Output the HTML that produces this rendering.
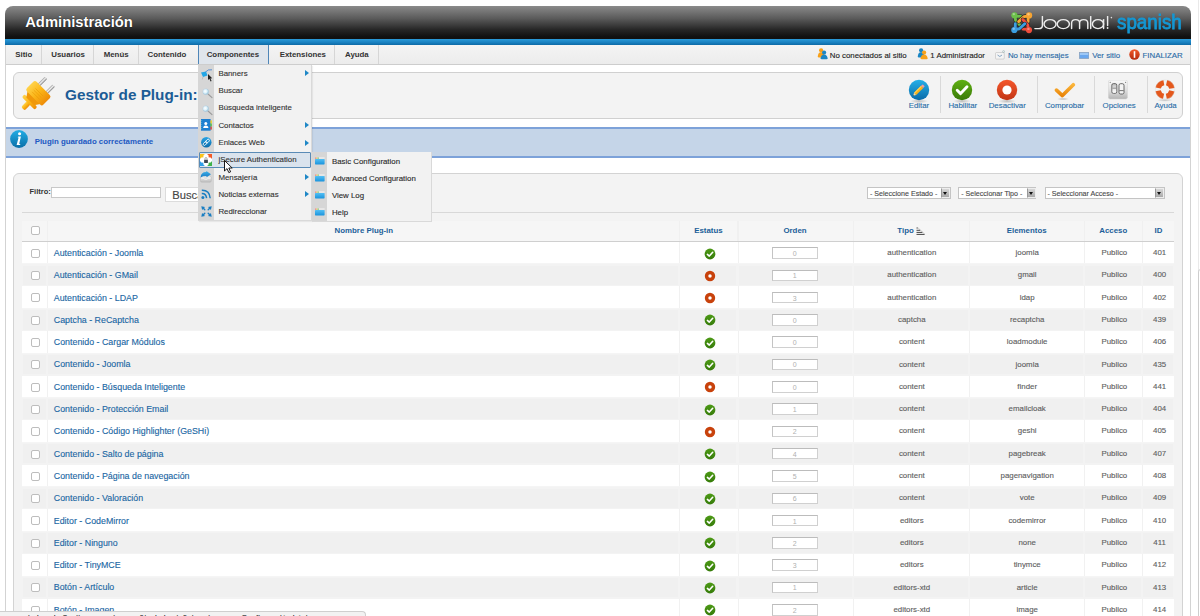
<!DOCTYPE html>
<html><head><meta charset="utf-8"><style>
*{box-sizing:border-box;margin:0;padding:0}
html,body{width:1200px;height:616px;overflow:hidden;background:#fff;font-family:"Liberation Sans",sans-serif;font-size:7.86px;line-height:1;color:#333;-webkit-text-stroke-width:0.12px}
body{position:relative}
.a{position:absolute;white-space:nowrap}
.b{font-weight:bold}
</style></head><body>
<div class="a" style="left:1197.6px;top:0;width:1px;height:272px;background:#e9e9e9"></div>
<div class="a" style="left:1197.6px;top:268.5px;width:6px;height:360px;background:#fff;border-left:1px solid #cdcdcd;border-top:1px solid #d6d6d6;border-radius:3px 0 0 0"></div>
<div class="a" style="left:5px;top:45px;width:1px;height:571px;background:#d3d3d3"></div>
<div class="a" style="left:1190px;top:45px;width:1px;height:571px;background:#d3d3d3"></div>
<div class="a" style="left:5px;top:6px;width:1186px;height:33px;border-radius:8px 8px 0 0;background:linear-gradient(#8a8a8a,#5a5a5a 38%,#262626 72%,#121212 92%,#101010)"></div>
<div class="a" style="left:25.2px;top:14.97px;font-size:14.8px;font-weight:bold;-webkit-text-stroke-width:0;color:#fff;text-shadow:0 0 1px #000">Administración</div>
<div class="a" style="left:5px;top:39px;width:1186px;height:6.2px;background:linear-gradient(#2b9ad8,#1a82c2 55%,#0d6aa6)"></div>
<div class="a" style="left:6px;top:45px;width:1184px;height:20.2px;background:linear-gradient(#f4f4f4,#ececec);border-bottom:1px solid #cdcdcd"></div>
<div class="a" style="left:41.3px;top:45px;width:1px;height:19px;background:#d6d6d6"></div>
<div class="a" style="left:15.3px;top:51.25px;font-weight:bold;-webkit-text-stroke-width:0;color:#333">Sitio</div>
<div class="a" style="left:93.3px;top:45px;width:1px;height:19px;background:#d6d6d6"></div>
<div class="a" style="left:51.3px;top:51.25px;font-weight:bold;-webkit-text-stroke-width:0;color:#333">Usuarios</div>
<div class="a" style="left:137.5px;top:45px;width:1px;height:19px;background:#d6d6d6"></div>
<div class="a" style="left:103.7px;top:51.25px;font-weight:bold;-webkit-text-stroke-width:0;color:#333">Menús</div>
<div class="a" style="left:197.5px;top:45px;width:1px;height:19px;background:#d6d6d6"></div>
<div class="a" style="left:147.5px;top:51.25px;font-weight:bold;-webkit-text-stroke-width:0;color:#333">Contenido</div>
<div class="a" style="left:197.5px;top:45px;width:71.5px;height:19px;background:#dfe5ec;border-left:1.5px solid #4f86b8;border-right:1.5px solid #4f86b8"></div>
<div class="a" style="left:206.7px;top:51.25px;font-weight:bold;-webkit-text-stroke-width:0;color:#333">Componentes</div>
<div class="a" style="left:334px;top:45px;width:1px;height:19px;background:#d6d6d6"></div>
<div class="a" style="left:279.7px;top:51.25px;font-weight:bold;-webkit-text-stroke-width:0;color:#333">Extensiones</div>
<div class="a" style="left:378px;top:45px;width:1px;height:19px;background:#d6d6d6"></div>
<div class="a" style="left:345px;top:51.25px;font-weight:bold;-webkit-text-stroke-width:0;color:#333">Ayuda</div>
<div class="a" style="left:829.8px;top:51.65px;color:#222">No conectados al sitio</div>
<div class="a" style="left:930.3px;top:51.65px;color:#222">1 Administrador</div>
<div class="a" style="left:1007.9px;top:51.65px;color:#2a6aa6">No hay mensajes</div>
<div class="a" style="left:1092.2px;top:51.65px;color:#2a6aa6">Ver sitio</div>
<div class="a" style="left:1142.5px;top:51.65px;color:#2a6aa6">FINALIZAR</div>
<div class="a" style="left:13.3px;top:71.9px;width:1169.5px;height:47px;border:1px solid #d0d0d0;border-radius:6px;background:#f3f3f3"></div>
<div class="a" style="left:65px;top:86.85px;font-size:15.3px;font-weight:bold;-webkit-text-stroke-width:0;color:#1c5c96">Gestor de Plug-in: Plug-ins</div>
<div class="a" style="left:908.7px;top:102.35px;color:#2a6ea8">Editar</div>
<div class="a" style="left:948.4px;top:102.35px;color:#2a6ea8">Habilitar</div>
<div class="a" style="left:988.7px;top:102.35px;color:#2a6ea8">Desactivar</div>
<div class="a" style="left:1044.9px;top:102.35px;color:#2a6ea8">Comprobar</div>
<div class="a" style="left:1102.6px;top:102.35px;color:#2a6ea8">Opciones</div>
<div class="a" style="left:1154.5px;top:102.35px;color:#2a6ea8">Ayuda</div>
<div class="a" style="left:940.4px;top:76.3px;width:1px;height:37px;background:#d9d9d9"></div>
<div class="a" style="left:1036.6px;top:76.3px;width:1px;height:37px;background:#d9d9d9"></div>
<div class="a" style="left:1094.4px;top:76.3px;width:1px;height:37px;background:#d9d9d9"></div>
<div class="a" style="left:1146.6px;top:76.3px;width:1px;height:37px;background:#d9d9d9"></div>
<div class="a" style="left:6px;top:126.8px;width:1184px;height:30.9px;background:#c5d5e8;border-top:2.1px solid #7da2d9;border-bottom:2.4px solid #7da2d9"></div>
<div class="a" style="left:34.7px;top:137.75px;font-weight:bold;-webkit-text-stroke-width:0;color:#2158c2">Plugin guardado correctamente</div>
<div class="a" style="left:13.3px;top:172.5px;width:1169.3px;height:460px;border:1px solid #d3d3d3;border-radius:6px;background:#f3f3f3"></div>
<div class="a" style="left:29.5px;top:187.95px;font-weight:bold;-webkit-text-stroke-width:0;color:#333;font-size:7.5px">Filtro:</div>
<div class="a" style="left:51.3px;top:187.2px;width:109.5px;height:11.2px;background:#fff;border:1px solid #c8c8c8"></div>
<div class="a" style="left:165.1px;top:187.3px;width:60px;height:14.9px;background:#fff;border:1px solid #dcdcdc"></div>
<div class="a" style="left:172.3px;top:189.82px;font-size:11.2px;color:#444">Buscar</div>
<div class="a" style="left:22px;top:212px;width:1152px;height:1px;background:#d8d8d8"></div>
<div class="a" style="left:866.9px;top:187.3px;width:83.8px;height:11.4px;background:#fff;border:1px solid #c4c4c4"></div>
<div class="a" style="left:869.9px;top:190.69px;font-size:7.1px;color:#4a4a4a">- Seleccione Estado -</div>
<div class="a" style="left:940.6999999999999px;top:188.3px;width:9px;height:9.4px;background:linear-gradient(#d8d8d8,#a9a9a9);border:1px solid #eee;border-left-color:#999"></div>
<div class="a" style="left:942.8px;top:192.0px;width:0;height:0;border-left:2.6px solid transparent;border-right:2.6px solid transparent;border-top:3.6px solid #111"></div>
<div class="a" style="left:958.2px;top:187.3px;width:78.3px;height:11.4px;background:#fff;border:1px solid #c4c4c4"></div>
<div class="a" style="left:961.2px;top:190.69px;font-size:7.1px;color:#4a4a4a">- Seleccionar Tipo -</div>
<div class="a" style="left:1026.5px;top:188.3px;width:9px;height:9.4px;background:linear-gradient(#d8d8d8,#a9a9a9);border:1px solid #eee;border-left-color:#999"></div>
<div class="a" style="left:1028.6px;top:192.0px;width:0;height:0;border-left:2.6px solid transparent;border-right:2.6px solid transparent;border-top:3.6px solid #111"></div>
<div class="a" style="left:1044.5px;top:187.3px;width:120.8px;height:11.4px;background:#fff;border:1px solid #c4c4c4"></div>
<div class="a" style="left:1047.5px;top:190.69px;font-size:7.1px;color:#4a4a4a">- Seleccionar Acceso -</div>
<div class="a" style="left:1155.3px;top:188.3px;width:9px;height:9.4px;background:linear-gradient(#d8d8d8,#a9a9a9);border:1px solid #eee;border-left-color:#999"></div>
<div class="a" style="left:1157.3999999999999px;top:192.0px;width:0;height:0;border-left:2.6px solid transparent;border-right:2.6px solid transparent;border-top:3.6px solid #111"></div>
<div class="a" style="left:22.0px;top:220.5px;width:1152.0px;height:21px;background:#f0f0f0"></div>
<div class="a" style="left:22.0px;top:220.6px;width:25.0px;height:20.8px;background:#f6f6f6"></div>
<div class="a" style="left:48.0px;top:220.6px;width:631.2px;height:20.8px;background:#f6f6f6"></div>
<div class="a" style="left:680.2px;top:220.6px;width:57.299999999999955px;height:20.8px;background:#f6f6f6"></div>
<div class="a" style="left:738.5px;top:220.6px;width:114.39999999999998px;height:20.8px;background:#f6f6f6"></div>
<div class="a" style="left:853.9px;top:220.6px;width:114.80000000000007px;height:20.8px;background:#f6f6f6"></div>
<div class="a" style="left:969.7px;top:220.6px;width:114.29999999999995px;height:20.8px;background:#f6f6f6"></div>
<div class="a" style="left:1085.0px;top:220.6px;width:57.40000000000009px;height:20.8px;background:#f6f6f6"></div>
<div class="a" style="left:1143.4px;top:220.6px;width:30.59999999999991px;height:20.8px;background:#f6f6f6"></div>
<div class="a" style="left:22.0px;top:241.2px;width:1152.0px;height:1px;background:#cfcfcf"></div>
<div class="a" style="left:334.6px;top:226.55px;font-weight:bold;-webkit-text-stroke-width:0;color:#1c5f99">Nombre Plug-in</div>
<div class="a" style="left:658.4px;width:100px;text-align:center;top:226.55px;font-weight:bold;-webkit-text-stroke-width:0;color:#1c5f99">Estatus</div>
<div class="a" style="left:745px;width:100px;text-align:center;top:226.55px;font-weight:bold;-webkit-text-stroke-width:0;color:#1c5f99">Orden</div>
<div class="a" style="left:976.7px;width:100px;text-align:center;top:226.55px;font-weight:bold;-webkit-text-stroke-width:0;color:#1c5f99">Elementos</div>
<div class="a" style="left:1063.3px;width:100px;text-align:center;top:226.55px;font-weight:bold;-webkit-text-stroke-width:0;color:#1c5f99">Acceso</div>
<div class="a" style="left:1108.5px;width:100px;text-align:center;top:226.55px;font-weight:bold;-webkit-text-stroke-width:0;color:#1c5f99">ID</div>
<div class="a" style="left:897.3px;top:226.55px;font-weight:bold;-webkit-text-stroke-width:0;color:#1c5f99">Tipo</div>
<div class="a" style="left:31.1px;top:226.1px;width:9.2px;height:9px;border:1px solid #bdbdbd;border-radius:2px;background:#fff"></div>
<div class="a" style="left:22.0px;top:241.7px;width:1152.0px;height:22.3px;background:#fff"></div>
<div class="a" style="left:47.0px;top:241.7px;width:1px;height:22.3px;background:#f1f1f1"></div>
<div class="a" style="left:679.2px;top:241.7px;width:1px;height:22.3px;background:#f1f1f1"></div>
<div class="a" style="left:737.5px;top:241.7px;width:1px;height:22.3px;background:#f1f1f1"></div>
<div class="a" style="left:852.9px;top:241.7px;width:1px;height:22.3px;background:#f1f1f1"></div>
<div class="a" style="left:968.7px;top:241.7px;width:1px;height:22.3px;background:#f1f1f1"></div>
<div class="a" style="left:1084.0px;top:241.7px;width:1px;height:22.3px;background:#f1f1f1"></div>
<div class="a" style="left:1142.4px;top:241.7px;width:1px;height:22.3px;background:#f1f1f1"></div>
<div class="a" style="left:22.0px;top:263.4px;width:1152.0px;height:1px;background:#f5f5f5"></div>
<div class="a" style="left:31.1px;top:248.79999999999998px;width:9.2px;height:9px;border:1px solid #bdbdbd;border-radius:2px;background:#fff"></div>
<div class="a" style="left:53.8px;top:248.91px;font-size:8.85px;color:#1a66a3">Autenticación - Joomla</div>
<div class="a" style="left:771.9px;top:247.2px;width:45.8px;height:11.6px;border:1px solid #d0d0d0;border-top-color:#bcbcbc;border-left-color:#c4c4c4;background:#fff"></div>
<div class="a" style="left:771.7px;width:45.8px;text-align:center;top:249.97px;font-size:7.0px;color:#b0b0b0;-webkit-text-stroke-width:0">0</div>
<div class="a" style="left:861.8px;width:100px;text-align:center;top:249.05px;color:#5e5e5e">authentication</div>
<div class="a" style="left:977.2px;width:100px;text-align:center;top:249.05px;color:#5e5e5e">joomla</div>
<div class="a" style="left:1064.3px;width:100px;text-align:center;top:249.05px;color:#5e5e5e">Publico</div>
<div class="a" style="left:1109.6px;width:100px;text-align:center;top:249.05px;color:#5e5e5e">401</div>
<svg class="a" style="left:703.6px;top:247.5px;" width="12" height="12" viewBox="0 0 12 12"><defs><linearGradient id="sg" x1="0" y1="0" x2="0" y2="1"><stop offset="0" stop-color="#4d9a16"/><stop offset="1" stop-color="#367b0a"/></linearGradient></defs><circle cx="6" cy="6" r="5.4" fill="url(#sg)"/><path d="M3.4 6.4 L5.3 8.1 L8.7 4.3" fill="none" stroke="#fff" stroke-width="1.55" stroke-linecap="round" stroke-linejoin="round"/></svg>
<div class="a" style="left:23.0px;top:265.5px;width:23.0px;height:19.5px;background:#f0f0f0"></div>
<div class="a" style="left:48.0px;top:265.5px;width:630.2px;height:19.5px;background:#f0f0f0"></div>
<div class="a" style="left:680.2px;top:265.5px;width:56.299999999999955px;height:19.5px;background:#f0f0f0"></div>
<div class="a" style="left:738.5px;top:265.5px;width:113.39999999999998px;height:19.5px;background:#f0f0f0"></div>
<div class="a" style="left:853.9px;top:265.5px;width:113.80000000000007px;height:19.5px;background:#f0f0f0"></div>
<div class="a" style="left:969.7px;top:265.5px;width:113.29999999999995px;height:19.5px;background:#f0f0f0"></div>
<div class="a" style="left:1085.0px;top:265.5px;width:56.40000000000009px;height:19.5px;background:#f0f0f0"></div>
<div class="a" style="left:1143.4px;top:265.5px;width:29.59999999999991px;height:19.5px;background:#f0f0f0"></div>
<div class="a" style="left:31.1px;top:271.1px;width:9.2px;height:9px;border:1px solid #bdbdbd;border-radius:2px;background:#fff"></div>
<div class="a" style="left:53.8px;top:271.21px;font-size:8.85px;color:#1a66a3">Autenticación - GMail</div>
<div class="a" style="left:771.9px;top:269.5px;width:45.8px;height:11.6px;border:1px solid #d0d0d0;border-top-color:#bcbcbc;border-left-color:#c4c4c4;background:#fff"></div>
<div class="a" style="left:771.7px;width:45.8px;text-align:center;top:272.27px;font-size:7.0px;color:#b0b0b0;-webkit-text-stroke-width:0">1</div>
<div class="a" style="left:861.8px;width:100px;text-align:center;top:271.35px;color:#5e5e5e">authentication</div>
<div class="a" style="left:977.2px;width:100px;text-align:center;top:271.35px;color:#5e5e5e">gmail</div>
<div class="a" style="left:1064.3px;width:100px;text-align:center;top:271.35px;color:#5e5e5e">Publico</div>
<div class="a" style="left:1109.6px;width:100px;text-align:center;top:271.35px;color:#5e5e5e">400</div>
<svg class="a" style="left:703.6px;top:269.8px;" width="12" height="12" viewBox="0 0 12 12"><circle cx="6" cy="6" r="5.2" fill="#c8420c"/><circle cx="6" cy="6" r="1.75" fill="#fff"/></svg>
<div class="a" style="left:22.0px;top:286.3px;width:1152.0px;height:22.3px;background:#fff"></div>
<div class="a" style="left:47.0px;top:286.3px;width:1px;height:22.3px;background:#f1f1f1"></div>
<div class="a" style="left:679.2px;top:286.3px;width:1px;height:22.3px;background:#f1f1f1"></div>
<div class="a" style="left:737.5px;top:286.3px;width:1px;height:22.3px;background:#f1f1f1"></div>
<div class="a" style="left:852.9px;top:286.3px;width:1px;height:22.3px;background:#f1f1f1"></div>
<div class="a" style="left:968.7px;top:286.3px;width:1px;height:22.3px;background:#f1f1f1"></div>
<div class="a" style="left:1084.0px;top:286.3px;width:1px;height:22.3px;background:#f1f1f1"></div>
<div class="a" style="left:1142.4px;top:286.3px;width:1px;height:22.3px;background:#f1f1f1"></div>
<div class="a" style="left:22.0px;top:308.0px;width:1152.0px;height:1px;background:#f5f5f5"></div>
<div class="a" style="left:31.1px;top:293.40000000000003px;width:9.2px;height:9px;border:1px solid #bdbdbd;border-radius:2px;background:#fff"></div>
<div class="a" style="left:53.8px;top:293.51px;font-size:8.85px;color:#1a66a3">Autenticación - LDAP</div>
<div class="a" style="left:771.9px;top:291.8px;width:45.8px;height:11.6px;border:1px solid #d0d0d0;border-top-color:#bcbcbc;border-left-color:#c4c4c4;background:#fff"></div>
<div class="a" style="left:771.7px;width:45.8px;text-align:center;top:294.57px;font-size:7.0px;color:#b0b0b0;-webkit-text-stroke-width:0">3</div>
<div class="a" style="left:861.8px;width:100px;text-align:center;top:293.65px;color:#5e5e5e">authentication</div>
<div class="a" style="left:977.2px;width:100px;text-align:center;top:293.65px;color:#5e5e5e">ldap</div>
<div class="a" style="left:1064.3px;width:100px;text-align:center;top:293.65px;color:#5e5e5e">Publico</div>
<div class="a" style="left:1109.6px;width:100px;text-align:center;top:293.65px;color:#5e5e5e">402</div>
<svg class="a" style="left:703.6px;top:292.1px;" width="12" height="12" viewBox="0 0 12 12"><circle cx="6" cy="6" r="5.2" fill="#c8420c"/><circle cx="6" cy="6" r="1.75" fill="#fff"/></svg>
<div class="a" style="left:23.0px;top:310.1px;width:23.0px;height:19.5px;background:#f0f0f0"></div>
<div class="a" style="left:48.0px;top:310.1px;width:630.2px;height:19.5px;background:#f0f0f0"></div>
<div class="a" style="left:680.2px;top:310.1px;width:56.299999999999955px;height:19.5px;background:#f0f0f0"></div>
<div class="a" style="left:738.5px;top:310.1px;width:113.39999999999998px;height:19.5px;background:#f0f0f0"></div>
<div class="a" style="left:853.9px;top:310.1px;width:113.80000000000007px;height:19.5px;background:#f0f0f0"></div>
<div class="a" style="left:969.7px;top:310.1px;width:113.29999999999995px;height:19.5px;background:#f0f0f0"></div>
<div class="a" style="left:1085.0px;top:310.1px;width:56.40000000000009px;height:19.5px;background:#f0f0f0"></div>
<div class="a" style="left:1143.4px;top:310.1px;width:29.59999999999991px;height:19.5px;background:#f0f0f0"></div>
<div class="a" style="left:31.1px;top:315.70000000000005px;width:9.2px;height:9px;border:1px solid #bdbdbd;border-radius:2px;background:#fff"></div>
<div class="a" style="left:53.8px;top:315.81px;font-size:8.85px;color:#1a66a3">Captcha - ReCaptcha</div>
<div class="a" style="left:771.9px;top:314.1px;width:45.8px;height:11.6px;border:1px solid #d0d0d0;border-top-color:#bcbcbc;border-left-color:#c4c4c4;background:#fff"></div>
<div class="a" style="left:771.7px;width:45.8px;text-align:center;top:316.87px;font-size:7.0px;color:#b0b0b0;-webkit-text-stroke-width:0">0</div>
<div class="a" style="left:861.8px;width:100px;text-align:center;top:315.95px;color:#5e5e5e">captcha</div>
<div class="a" style="left:977.2px;width:100px;text-align:center;top:315.95px;color:#5e5e5e">recaptcha</div>
<div class="a" style="left:1064.3px;width:100px;text-align:center;top:315.95px;color:#5e5e5e">Publico</div>
<div class="a" style="left:1109.6px;width:100px;text-align:center;top:315.95px;color:#5e5e5e">439</div>
<svg class="a" style="left:703.6px;top:314.40000000000003px;" width="12" height="12" viewBox="0 0 12 12"><defs><linearGradient id="sg" x1="0" y1="0" x2="0" y2="1"><stop offset="0" stop-color="#4d9a16"/><stop offset="1" stop-color="#367b0a"/></linearGradient></defs><circle cx="6" cy="6" r="5.4" fill="url(#sg)"/><path d="M3.4 6.4 L5.3 8.1 L8.7 4.3" fill="none" stroke="#fff" stroke-width="1.55" stroke-linecap="round" stroke-linejoin="round"/></svg>
<div class="a" style="left:22.0px;top:330.9px;width:1152.0px;height:22.3px;background:#fff"></div>
<div class="a" style="left:47.0px;top:330.9px;width:1px;height:22.3px;background:#f1f1f1"></div>
<div class="a" style="left:679.2px;top:330.9px;width:1px;height:22.3px;background:#f1f1f1"></div>
<div class="a" style="left:737.5px;top:330.9px;width:1px;height:22.3px;background:#f1f1f1"></div>
<div class="a" style="left:852.9px;top:330.9px;width:1px;height:22.3px;background:#f1f1f1"></div>
<div class="a" style="left:968.7px;top:330.9px;width:1px;height:22.3px;background:#f1f1f1"></div>
<div class="a" style="left:1084.0px;top:330.9px;width:1px;height:22.3px;background:#f1f1f1"></div>
<div class="a" style="left:1142.4px;top:330.9px;width:1px;height:22.3px;background:#f1f1f1"></div>
<div class="a" style="left:22.0px;top:352.59999999999997px;width:1152.0px;height:1px;background:#f5f5f5"></div>
<div class="a" style="left:31.1px;top:338.0px;width:9.2px;height:9px;border:1px solid #bdbdbd;border-radius:2px;background:#fff"></div>
<div class="a" style="left:53.8px;top:338.11px;font-size:8.85px;color:#1a66a3">Contenido - Cargar Módulos</div>
<div class="a" style="left:771.9px;top:336.4px;width:45.8px;height:11.6px;border:1px solid #d0d0d0;border-top-color:#bcbcbc;border-left-color:#c4c4c4;background:#fff"></div>
<div class="a" style="left:771.7px;width:45.8px;text-align:center;top:339.17px;font-size:7.0px;color:#b0b0b0;-webkit-text-stroke-width:0">0</div>
<div class="a" style="left:861.8px;width:100px;text-align:center;top:338.25px;color:#5e5e5e">content</div>
<div class="a" style="left:977.2px;width:100px;text-align:center;top:338.25px;color:#5e5e5e">loadmodule</div>
<div class="a" style="left:1064.3px;width:100px;text-align:center;top:338.25px;color:#5e5e5e">Publico</div>
<div class="a" style="left:1109.6px;width:100px;text-align:center;top:338.25px;color:#5e5e5e">406</div>
<svg class="a" style="left:703.6px;top:336.7px;" width="12" height="12" viewBox="0 0 12 12"><defs><linearGradient id="sg" x1="0" y1="0" x2="0" y2="1"><stop offset="0" stop-color="#4d9a16"/><stop offset="1" stop-color="#367b0a"/></linearGradient></defs><circle cx="6" cy="6" r="5.4" fill="url(#sg)"/><path d="M3.4 6.4 L5.3 8.1 L8.7 4.3" fill="none" stroke="#fff" stroke-width="1.55" stroke-linecap="round" stroke-linejoin="round"/></svg>
<div class="a" style="left:23.0px;top:354.7px;width:23.0px;height:19.5px;background:#f0f0f0"></div>
<div class="a" style="left:48.0px;top:354.7px;width:630.2px;height:19.5px;background:#f0f0f0"></div>
<div class="a" style="left:680.2px;top:354.7px;width:56.299999999999955px;height:19.5px;background:#f0f0f0"></div>
<div class="a" style="left:738.5px;top:354.7px;width:113.39999999999998px;height:19.5px;background:#f0f0f0"></div>
<div class="a" style="left:853.9px;top:354.7px;width:113.80000000000007px;height:19.5px;background:#f0f0f0"></div>
<div class="a" style="left:969.7px;top:354.7px;width:113.29999999999995px;height:19.5px;background:#f0f0f0"></div>
<div class="a" style="left:1085.0px;top:354.7px;width:56.40000000000009px;height:19.5px;background:#f0f0f0"></div>
<div class="a" style="left:1143.4px;top:354.7px;width:29.59999999999991px;height:19.5px;background:#f0f0f0"></div>
<div class="a" style="left:31.1px;top:360.3px;width:9.2px;height:9px;border:1px solid #bdbdbd;border-radius:2px;background:#fff"></div>
<div class="a" style="left:53.8px;top:360.41px;font-size:8.85px;color:#1a66a3">Contenido - Joomla</div>
<div class="a" style="left:771.9px;top:358.7px;width:45.8px;height:11.6px;border:1px solid #d0d0d0;border-top-color:#bcbcbc;border-left-color:#c4c4c4;background:#fff"></div>
<div class="a" style="left:771.7px;width:45.8px;text-align:center;top:361.47px;font-size:7.0px;color:#b0b0b0;-webkit-text-stroke-width:0">0</div>
<div class="a" style="left:861.8px;width:100px;text-align:center;top:360.55px;color:#5e5e5e">content</div>
<div class="a" style="left:977.2px;width:100px;text-align:center;top:360.55px;color:#5e5e5e">joomla</div>
<div class="a" style="left:1064.3px;width:100px;text-align:center;top:360.55px;color:#5e5e5e">Publico</div>
<div class="a" style="left:1109.6px;width:100px;text-align:center;top:360.55px;color:#5e5e5e">435</div>
<svg class="a" style="left:703.6px;top:359.0px;" width="12" height="12" viewBox="0 0 12 12"><defs><linearGradient id="sg" x1="0" y1="0" x2="0" y2="1"><stop offset="0" stop-color="#4d9a16"/><stop offset="1" stop-color="#367b0a"/></linearGradient></defs><circle cx="6" cy="6" r="5.4" fill="url(#sg)"/><path d="M3.4 6.4 L5.3 8.1 L8.7 4.3" fill="none" stroke="#fff" stroke-width="1.55" stroke-linecap="round" stroke-linejoin="round"/></svg>
<div class="a" style="left:22.0px;top:375.5px;width:1152.0px;height:22.3px;background:#fff"></div>
<div class="a" style="left:47.0px;top:375.5px;width:1px;height:22.3px;background:#f1f1f1"></div>
<div class="a" style="left:679.2px;top:375.5px;width:1px;height:22.3px;background:#f1f1f1"></div>
<div class="a" style="left:737.5px;top:375.5px;width:1px;height:22.3px;background:#f1f1f1"></div>
<div class="a" style="left:852.9px;top:375.5px;width:1px;height:22.3px;background:#f1f1f1"></div>
<div class="a" style="left:968.7px;top:375.5px;width:1px;height:22.3px;background:#f1f1f1"></div>
<div class="a" style="left:1084.0px;top:375.5px;width:1px;height:22.3px;background:#f1f1f1"></div>
<div class="a" style="left:1142.4px;top:375.5px;width:1px;height:22.3px;background:#f1f1f1"></div>
<div class="a" style="left:22.0px;top:397.2px;width:1152.0px;height:1px;background:#f5f5f5"></div>
<div class="a" style="left:31.1px;top:382.6px;width:9.2px;height:9px;border:1px solid #bdbdbd;border-radius:2px;background:#fff"></div>
<div class="a" style="left:53.8px;top:382.71px;font-size:8.85px;color:#1a66a3">Contenido - Búsqueda Inteligente</div>
<div class="a" style="left:771.9px;top:381.0px;width:45.8px;height:11.6px;border:1px solid #d0d0d0;border-top-color:#bcbcbc;border-left-color:#c4c4c4;background:#fff"></div>
<div class="a" style="left:771.7px;width:45.8px;text-align:center;top:383.77px;font-size:7.0px;color:#b0b0b0;-webkit-text-stroke-width:0">0</div>
<div class="a" style="left:861.8px;width:100px;text-align:center;top:382.85px;color:#5e5e5e">content</div>
<div class="a" style="left:977.2px;width:100px;text-align:center;top:382.85px;color:#5e5e5e">finder</div>
<div class="a" style="left:1064.3px;width:100px;text-align:center;top:382.85px;color:#5e5e5e">Publico</div>
<div class="a" style="left:1109.6px;width:100px;text-align:center;top:382.85px;color:#5e5e5e">441</div>
<svg class="a" style="left:703.6px;top:381.3px;" width="12" height="12" viewBox="0 0 12 12"><circle cx="6" cy="6" r="5.2" fill="#c8420c"/><circle cx="6" cy="6" r="1.75" fill="#fff"/></svg>
<div class="a" style="left:23.0px;top:399.29999999999995px;width:23.0px;height:19.5px;background:#f0f0f0"></div>
<div class="a" style="left:48.0px;top:399.29999999999995px;width:630.2px;height:19.5px;background:#f0f0f0"></div>
<div class="a" style="left:680.2px;top:399.29999999999995px;width:56.299999999999955px;height:19.5px;background:#f0f0f0"></div>
<div class="a" style="left:738.5px;top:399.29999999999995px;width:113.39999999999998px;height:19.5px;background:#f0f0f0"></div>
<div class="a" style="left:853.9px;top:399.29999999999995px;width:113.80000000000007px;height:19.5px;background:#f0f0f0"></div>
<div class="a" style="left:969.7px;top:399.29999999999995px;width:113.29999999999995px;height:19.5px;background:#f0f0f0"></div>
<div class="a" style="left:1085.0px;top:399.29999999999995px;width:56.40000000000009px;height:19.5px;background:#f0f0f0"></div>
<div class="a" style="left:1143.4px;top:399.29999999999995px;width:29.59999999999991px;height:19.5px;background:#f0f0f0"></div>
<div class="a" style="left:31.1px;top:404.9px;width:9.2px;height:9px;border:1px solid #bdbdbd;border-radius:2px;background:#fff"></div>
<div class="a" style="left:53.8px;top:405.01px;font-size:8.85px;color:#1a66a3">Contenido - Protección Email</div>
<div class="a" style="left:771.9px;top:403.29999999999995px;width:45.8px;height:11.6px;border:1px solid #d0d0d0;border-top-color:#bcbcbc;border-left-color:#c4c4c4;background:#fff"></div>
<div class="a" style="left:771.7px;width:45.8px;text-align:center;top:406.07px;font-size:7.0px;color:#b0b0b0;-webkit-text-stroke-width:0">1</div>
<div class="a" style="left:861.8px;width:100px;text-align:center;top:405.15px;color:#5e5e5e">content</div>
<div class="a" style="left:977.2px;width:100px;text-align:center;top:405.15px;color:#5e5e5e">emailcloak</div>
<div class="a" style="left:1064.3px;width:100px;text-align:center;top:405.15px;color:#5e5e5e">Publico</div>
<div class="a" style="left:1109.6px;width:100px;text-align:center;top:405.15px;color:#5e5e5e">404</div>
<svg class="a" style="left:703.6px;top:403.59999999999997px;" width="12" height="12" viewBox="0 0 12 12"><defs><linearGradient id="sg" x1="0" y1="0" x2="0" y2="1"><stop offset="0" stop-color="#4d9a16"/><stop offset="1" stop-color="#367b0a"/></linearGradient></defs><circle cx="6" cy="6" r="5.4" fill="url(#sg)"/><path d="M3.4 6.4 L5.3 8.1 L8.7 4.3" fill="none" stroke="#fff" stroke-width="1.55" stroke-linecap="round" stroke-linejoin="round"/></svg>
<div class="a" style="left:22.0px;top:420.1px;width:1152.0px;height:22.3px;background:#fff"></div>
<div class="a" style="left:47.0px;top:420.1px;width:1px;height:22.3px;background:#f1f1f1"></div>
<div class="a" style="left:679.2px;top:420.1px;width:1px;height:22.3px;background:#f1f1f1"></div>
<div class="a" style="left:737.5px;top:420.1px;width:1px;height:22.3px;background:#f1f1f1"></div>
<div class="a" style="left:852.9px;top:420.1px;width:1px;height:22.3px;background:#f1f1f1"></div>
<div class="a" style="left:968.7px;top:420.1px;width:1px;height:22.3px;background:#f1f1f1"></div>
<div class="a" style="left:1084.0px;top:420.1px;width:1px;height:22.3px;background:#f1f1f1"></div>
<div class="a" style="left:1142.4px;top:420.1px;width:1px;height:22.3px;background:#f1f1f1"></div>
<div class="a" style="left:22.0px;top:441.8px;width:1152.0px;height:1px;background:#f5f5f5"></div>
<div class="a" style="left:31.1px;top:427.20000000000005px;width:9.2px;height:9px;border:1px solid #bdbdbd;border-radius:2px;background:#fff"></div>
<div class="a" style="left:53.8px;top:427.31px;font-size:8.85px;color:#1a66a3">Contenido - Código Highlighter (GeSHi)</div>
<div class="a" style="left:771.9px;top:425.6px;width:45.8px;height:11.6px;border:1px solid #d0d0d0;border-top-color:#bcbcbc;border-left-color:#c4c4c4;background:#fff"></div>
<div class="a" style="left:771.7px;width:45.8px;text-align:center;top:428.37px;font-size:7.0px;color:#b0b0b0;-webkit-text-stroke-width:0">2</div>
<div class="a" style="left:861.8px;width:100px;text-align:center;top:427.45px;color:#5e5e5e">content</div>
<div class="a" style="left:977.2px;width:100px;text-align:center;top:427.45px;color:#5e5e5e">geshi</div>
<div class="a" style="left:1064.3px;width:100px;text-align:center;top:427.45px;color:#5e5e5e">Publico</div>
<div class="a" style="left:1109.6px;width:100px;text-align:center;top:427.45px;color:#5e5e5e">405</div>
<svg class="a" style="left:703.6px;top:425.90000000000003px;" width="12" height="12" viewBox="0 0 12 12"><circle cx="6" cy="6" r="5.2" fill="#c8420c"/><circle cx="6" cy="6" r="1.75" fill="#fff"/></svg>
<div class="a" style="left:23.0px;top:443.9px;width:23.0px;height:19.5px;background:#f0f0f0"></div>
<div class="a" style="left:48.0px;top:443.9px;width:630.2px;height:19.5px;background:#f0f0f0"></div>
<div class="a" style="left:680.2px;top:443.9px;width:56.299999999999955px;height:19.5px;background:#f0f0f0"></div>
<div class="a" style="left:738.5px;top:443.9px;width:113.39999999999998px;height:19.5px;background:#f0f0f0"></div>
<div class="a" style="left:853.9px;top:443.9px;width:113.80000000000007px;height:19.5px;background:#f0f0f0"></div>
<div class="a" style="left:969.7px;top:443.9px;width:113.29999999999995px;height:19.5px;background:#f0f0f0"></div>
<div class="a" style="left:1085.0px;top:443.9px;width:56.40000000000009px;height:19.5px;background:#f0f0f0"></div>
<div class="a" style="left:1143.4px;top:443.9px;width:29.59999999999991px;height:19.5px;background:#f0f0f0"></div>
<div class="a" style="left:31.1px;top:449.5px;width:9.2px;height:9px;border:1px solid #bdbdbd;border-radius:2px;background:#fff"></div>
<div class="a" style="left:53.8px;top:449.61px;font-size:8.85px;color:#1a66a3">Contenido - Salto de página</div>
<div class="a" style="left:771.9px;top:447.9px;width:45.8px;height:11.6px;border:1px solid #d0d0d0;border-top-color:#bcbcbc;border-left-color:#c4c4c4;background:#fff"></div>
<div class="a" style="left:771.7px;width:45.8px;text-align:center;top:450.67px;font-size:7.0px;color:#b0b0b0;-webkit-text-stroke-width:0">4</div>
<div class="a" style="left:861.8px;width:100px;text-align:center;top:449.75px;color:#5e5e5e">content</div>
<div class="a" style="left:977.2px;width:100px;text-align:center;top:449.75px;color:#5e5e5e">pagebreak</div>
<div class="a" style="left:1064.3px;width:100px;text-align:center;top:449.75px;color:#5e5e5e">Publico</div>
<div class="a" style="left:1109.6px;width:100px;text-align:center;top:449.75px;color:#5e5e5e">407</div>
<svg class="a" style="left:703.6px;top:448.2px;" width="12" height="12" viewBox="0 0 12 12"><defs><linearGradient id="sg" x1="0" y1="0" x2="0" y2="1"><stop offset="0" stop-color="#4d9a16"/><stop offset="1" stop-color="#367b0a"/></linearGradient></defs><circle cx="6" cy="6" r="5.4" fill="url(#sg)"/><path d="M3.4 6.4 L5.3 8.1 L8.7 4.3" fill="none" stroke="#fff" stroke-width="1.55" stroke-linecap="round" stroke-linejoin="round"/></svg>
<div class="a" style="left:22.0px;top:464.7px;width:1152.0px;height:22.3px;background:#fff"></div>
<div class="a" style="left:47.0px;top:464.7px;width:1px;height:22.3px;background:#f1f1f1"></div>
<div class="a" style="left:679.2px;top:464.7px;width:1px;height:22.3px;background:#f1f1f1"></div>
<div class="a" style="left:737.5px;top:464.7px;width:1px;height:22.3px;background:#f1f1f1"></div>
<div class="a" style="left:852.9px;top:464.7px;width:1px;height:22.3px;background:#f1f1f1"></div>
<div class="a" style="left:968.7px;top:464.7px;width:1px;height:22.3px;background:#f1f1f1"></div>
<div class="a" style="left:1084.0px;top:464.7px;width:1px;height:22.3px;background:#f1f1f1"></div>
<div class="a" style="left:1142.4px;top:464.7px;width:1px;height:22.3px;background:#f1f1f1"></div>
<div class="a" style="left:22.0px;top:486.4px;width:1152.0px;height:1px;background:#f5f5f5"></div>
<div class="a" style="left:31.1px;top:471.8px;width:9.2px;height:9px;border:1px solid #bdbdbd;border-radius:2px;background:#fff"></div>
<div class="a" style="left:53.8px;top:471.91px;font-size:8.85px;color:#1a66a3">Contenido - Página de navegación</div>
<div class="a" style="left:771.9px;top:470.2px;width:45.8px;height:11.6px;border:1px solid #d0d0d0;border-top-color:#bcbcbc;border-left-color:#c4c4c4;background:#fff"></div>
<div class="a" style="left:771.7px;width:45.8px;text-align:center;top:472.97px;font-size:7.0px;color:#b0b0b0;-webkit-text-stroke-width:0">5</div>
<div class="a" style="left:861.8px;width:100px;text-align:center;top:472.05px;color:#5e5e5e">content</div>
<div class="a" style="left:977.2px;width:100px;text-align:center;top:472.05px;color:#5e5e5e">pagenavigation</div>
<div class="a" style="left:1064.3px;width:100px;text-align:center;top:472.05px;color:#5e5e5e">Publico</div>
<div class="a" style="left:1109.6px;width:100px;text-align:center;top:472.05px;color:#5e5e5e">408</div>
<svg class="a" style="left:703.6px;top:470.5px;" width="12" height="12" viewBox="0 0 12 12"><defs><linearGradient id="sg" x1="0" y1="0" x2="0" y2="1"><stop offset="0" stop-color="#4d9a16"/><stop offset="1" stop-color="#367b0a"/></linearGradient></defs><circle cx="6" cy="6" r="5.4" fill="url(#sg)"/><path d="M3.4 6.4 L5.3 8.1 L8.7 4.3" fill="none" stroke="#fff" stroke-width="1.55" stroke-linecap="round" stroke-linejoin="round"/></svg>
<div class="a" style="left:23.0px;top:488.5px;width:23.0px;height:19.5px;background:#f0f0f0"></div>
<div class="a" style="left:48.0px;top:488.5px;width:630.2px;height:19.5px;background:#f0f0f0"></div>
<div class="a" style="left:680.2px;top:488.5px;width:56.299999999999955px;height:19.5px;background:#f0f0f0"></div>
<div class="a" style="left:738.5px;top:488.5px;width:113.39999999999998px;height:19.5px;background:#f0f0f0"></div>
<div class="a" style="left:853.9px;top:488.5px;width:113.80000000000007px;height:19.5px;background:#f0f0f0"></div>
<div class="a" style="left:969.7px;top:488.5px;width:113.29999999999995px;height:19.5px;background:#f0f0f0"></div>
<div class="a" style="left:1085.0px;top:488.5px;width:56.40000000000009px;height:19.5px;background:#f0f0f0"></div>
<div class="a" style="left:1143.4px;top:488.5px;width:29.59999999999991px;height:19.5px;background:#f0f0f0"></div>
<div class="a" style="left:31.1px;top:494.1px;width:9.2px;height:9px;border:1px solid #bdbdbd;border-radius:2px;background:#fff"></div>
<div class="a" style="left:53.8px;top:494.21px;font-size:8.85px;color:#1a66a3">Contenido - Valoración</div>
<div class="a" style="left:771.9px;top:492.5px;width:45.8px;height:11.6px;border:1px solid #d0d0d0;border-top-color:#bcbcbc;border-left-color:#c4c4c4;background:#fff"></div>
<div class="a" style="left:771.7px;width:45.8px;text-align:center;top:495.27px;font-size:7.0px;color:#b0b0b0;-webkit-text-stroke-width:0">6</div>
<div class="a" style="left:861.8px;width:100px;text-align:center;top:494.35px;color:#5e5e5e">content</div>
<div class="a" style="left:977.2px;width:100px;text-align:center;top:494.35px;color:#5e5e5e">vote</div>
<div class="a" style="left:1064.3px;width:100px;text-align:center;top:494.35px;color:#5e5e5e">Publico</div>
<div class="a" style="left:1109.6px;width:100px;text-align:center;top:494.35px;color:#5e5e5e">409</div>
<svg class="a" style="left:703.6px;top:492.8px;" width="12" height="12" viewBox="0 0 12 12"><defs><linearGradient id="sg" x1="0" y1="0" x2="0" y2="1"><stop offset="0" stop-color="#4d9a16"/><stop offset="1" stop-color="#367b0a"/></linearGradient></defs><circle cx="6" cy="6" r="5.4" fill="url(#sg)"/><path d="M3.4 6.4 L5.3 8.1 L8.7 4.3" fill="none" stroke="#fff" stroke-width="1.55" stroke-linecap="round" stroke-linejoin="round"/></svg>
<div class="a" style="left:22.0px;top:509.3px;width:1152.0px;height:22.3px;background:#fff"></div>
<div class="a" style="left:47.0px;top:509.3px;width:1px;height:22.3px;background:#f1f1f1"></div>
<div class="a" style="left:679.2px;top:509.3px;width:1px;height:22.3px;background:#f1f1f1"></div>
<div class="a" style="left:737.5px;top:509.3px;width:1px;height:22.3px;background:#f1f1f1"></div>
<div class="a" style="left:852.9px;top:509.3px;width:1px;height:22.3px;background:#f1f1f1"></div>
<div class="a" style="left:968.7px;top:509.3px;width:1px;height:22.3px;background:#f1f1f1"></div>
<div class="a" style="left:1084.0px;top:509.3px;width:1px;height:22.3px;background:#f1f1f1"></div>
<div class="a" style="left:1142.4px;top:509.3px;width:1px;height:22.3px;background:#f1f1f1"></div>
<div class="a" style="left:22.0px;top:531.0px;width:1152.0px;height:1px;background:#f5f5f5"></div>
<div class="a" style="left:31.1px;top:516.4px;width:9.2px;height:9px;border:1px solid #bdbdbd;border-radius:2px;background:#fff"></div>
<div class="a" style="left:53.8px;top:516.51px;font-size:8.85px;color:#1a66a3">Editor - CodeMirror</div>
<div class="a" style="left:771.9px;top:514.8px;width:45.8px;height:11.6px;border:1px solid #d0d0d0;border-top-color:#bcbcbc;border-left-color:#c4c4c4;background:#fff"></div>
<div class="a" style="left:771.7px;width:45.8px;text-align:center;top:517.57px;font-size:7.0px;color:#b0b0b0;-webkit-text-stroke-width:0">1</div>
<div class="a" style="left:861.8px;width:100px;text-align:center;top:516.65px;color:#5e5e5e">editors</div>
<div class="a" style="left:977.2px;width:100px;text-align:center;top:516.65px;color:#5e5e5e">codemirror</div>
<div class="a" style="left:1064.3px;width:100px;text-align:center;top:516.65px;color:#5e5e5e">Publico</div>
<div class="a" style="left:1109.6px;width:100px;text-align:center;top:516.65px;color:#5e5e5e">410</div>
<svg class="a" style="left:703.6px;top:515.1px;" width="12" height="12" viewBox="0 0 12 12"><defs><linearGradient id="sg" x1="0" y1="0" x2="0" y2="1"><stop offset="0" stop-color="#4d9a16"/><stop offset="1" stop-color="#367b0a"/></linearGradient></defs><circle cx="6" cy="6" r="5.4" fill="url(#sg)"/><path d="M3.4 6.4 L5.3 8.1 L8.7 4.3" fill="none" stroke="#fff" stroke-width="1.55" stroke-linecap="round" stroke-linejoin="round"/></svg>
<div class="a" style="left:23.0px;top:533.1px;width:23.0px;height:19.5px;background:#f0f0f0"></div>
<div class="a" style="left:48.0px;top:533.1px;width:630.2px;height:19.5px;background:#f0f0f0"></div>
<div class="a" style="left:680.2px;top:533.1px;width:56.299999999999955px;height:19.5px;background:#f0f0f0"></div>
<div class="a" style="left:738.5px;top:533.1px;width:113.39999999999998px;height:19.5px;background:#f0f0f0"></div>
<div class="a" style="left:853.9px;top:533.1px;width:113.80000000000007px;height:19.5px;background:#f0f0f0"></div>
<div class="a" style="left:969.7px;top:533.1px;width:113.29999999999995px;height:19.5px;background:#f0f0f0"></div>
<div class="a" style="left:1085.0px;top:533.1px;width:56.40000000000009px;height:19.5px;background:#f0f0f0"></div>
<div class="a" style="left:1143.4px;top:533.1px;width:29.59999999999991px;height:19.5px;background:#f0f0f0"></div>
<div class="a" style="left:31.1px;top:538.7px;width:9.2px;height:9px;border:1px solid #bdbdbd;border-radius:2px;background:#fff"></div>
<div class="a" style="left:53.8px;top:538.81px;font-size:8.85px;color:#1a66a3">Editor - Ninguno</div>
<div class="a" style="left:771.9px;top:537.1px;width:45.8px;height:11.6px;border:1px solid #d0d0d0;border-top-color:#bcbcbc;border-left-color:#c4c4c4;background:#fff"></div>
<div class="a" style="left:771.7px;width:45.8px;text-align:center;top:539.87px;font-size:7.0px;color:#b0b0b0;-webkit-text-stroke-width:0">2</div>
<div class="a" style="left:861.8px;width:100px;text-align:center;top:538.95px;color:#5e5e5e">editors</div>
<div class="a" style="left:977.2px;width:100px;text-align:center;top:538.95px;color:#5e5e5e">none</div>
<div class="a" style="left:1064.3px;width:100px;text-align:center;top:538.95px;color:#5e5e5e">Publico</div>
<div class="a" style="left:1109.6px;width:100px;text-align:center;top:538.95px;color:#5e5e5e">411</div>
<svg class="a" style="left:703.6px;top:537.4px;" width="12" height="12" viewBox="0 0 12 12"><defs><linearGradient id="sg" x1="0" y1="0" x2="0" y2="1"><stop offset="0" stop-color="#4d9a16"/><stop offset="1" stop-color="#367b0a"/></linearGradient></defs><circle cx="6" cy="6" r="5.4" fill="url(#sg)"/><path d="M3.4 6.4 L5.3 8.1 L8.7 4.3" fill="none" stroke="#fff" stroke-width="1.55" stroke-linecap="round" stroke-linejoin="round"/></svg>
<div class="a" style="left:22.0px;top:553.9px;width:1152.0px;height:22.3px;background:#fff"></div>
<div class="a" style="left:47.0px;top:553.9px;width:1px;height:22.3px;background:#f1f1f1"></div>
<div class="a" style="left:679.2px;top:553.9px;width:1px;height:22.3px;background:#f1f1f1"></div>
<div class="a" style="left:737.5px;top:553.9px;width:1px;height:22.3px;background:#f1f1f1"></div>
<div class="a" style="left:852.9px;top:553.9px;width:1px;height:22.3px;background:#f1f1f1"></div>
<div class="a" style="left:968.7px;top:553.9px;width:1px;height:22.3px;background:#f1f1f1"></div>
<div class="a" style="left:1084.0px;top:553.9px;width:1px;height:22.3px;background:#f1f1f1"></div>
<div class="a" style="left:1142.4px;top:553.9px;width:1px;height:22.3px;background:#f1f1f1"></div>
<div class="a" style="left:22.0px;top:575.5999999999999px;width:1152.0px;height:1px;background:#f5f5f5"></div>
<div class="a" style="left:31.1px;top:561.0px;width:9.2px;height:9px;border:1px solid #bdbdbd;border-radius:2px;background:#fff"></div>
<div class="a" style="left:53.8px;top:561.11px;font-size:8.85px;color:#1a66a3">Editor - TinyMCE</div>
<div class="a" style="left:771.9px;top:559.4px;width:45.8px;height:11.6px;border:1px solid #d0d0d0;border-top-color:#bcbcbc;border-left-color:#c4c4c4;background:#fff"></div>
<div class="a" style="left:771.7px;width:45.8px;text-align:center;top:562.17px;font-size:7.0px;color:#b0b0b0;-webkit-text-stroke-width:0">3</div>
<div class="a" style="left:861.8px;width:100px;text-align:center;top:561.25px;color:#5e5e5e">editors</div>
<div class="a" style="left:977.2px;width:100px;text-align:center;top:561.25px;color:#5e5e5e">tinymce</div>
<div class="a" style="left:1064.3px;width:100px;text-align:center;top:561.25px;color:#5e5e5e">Publico</div>
<div class="a" style="left:1109.6px;width:100px;text-align:center;top:561.25px;color:#5e5e5e">412</div>
<svg class="a" style="left:703.6px;top:559.6999999999999px;" width="12" height="12" viewBox="0 0 12 12"><defs><linearGradient id="sg" x1="0" y1="0" x2="0" y2="1"><stop offset="0" stop-color="#4d9a16"/><stop offset="1" stop-color="#367b0a"/></linearGradient></defs><circle cx="6" cy="6" r="5.4" fill="url(#sg)"/><path d="M3.4 6.4 L5.3 8.1 L8.7 4.3" fill="none" stroke="#fff" stroke-width="1.55" stroke-linecap="round" stroke-linejoin="round"/></svg>
<div class="a" style="left:23.0px;top:577.7px;width:23.0px;height:19.5px;background:#f0f0f0"></div>
<div class="a" style="left:48.0px;top:577.7px;width:630.2px;height:19.5px;background:#f0f0f0"></div>
<div class="a" style="left:680.2px;top:577.7px;width:56.299999999999955px;height:19.5px;background:#f0f0f0"></div>
<div class="a" style="left:738.5px;top:577.7px;width:113.39999999999998px;height:19.5px;background:#f0f0f0"></div>
<div class="a" style="left:853.9px;top:577.7px;width:113.80000000000007px;height:19.5px;background:#f0f0f0"></div>
<div class="a" style="left:969.7px;top:577.7px;width:113.29999999999995px;height:19.5px;background:#f0f0f0"></div>
<div class="a" style="left:1085.0px;top:577.7px;width:56.40000000000009px;height:19.5px;background:#f0f0f0"></div>
<div class="a" style="left:1143.4px;top:577.7px;width:29.59999999999991px;height:19.5px;background:#f0f0f0"></div>
<div class="a" style="left:31.1px;top:583.3000000000001px;width:9.2px;height:9px;border:1px solid #bdbdbd;border-radius:2px;background:#fff"></div>
<div class="a" style="left:53.8px;top:583.41px;font-size:8.85px;color:#1a66a3">Botón - Artículo</div>
<div class="a" style="left:771.9px;top:581.7px;width:45.8px;height:11.6px;border:1px solid #d0d0d0;border-top-color:#bcbcbc;border-left-color:#c4c4c4;background:#fff"></div>
<div class="a" style="left:771.7px;width:45.8px;text-align:center;top:584.47px;font-size:7.0px;color:#b0b0b0;-webkit-text-stroke-width:0">1</div>
<div class="a" style="left:861.8px;width:100px;text-align:center;top:583.55px;color:#5e5e5e">editors-xtd</div>
<div class="a" style="left:977.2px;width:100px;text-align:center;top:583.55px;color:#5e5e5e">article</div>
<div class="a" style="left:1064.3px;width:100px;text-align:center;top:583.55px;color:#5e5e5e">Publico</div>
<div class="a" style="left:1109.6px;width:100px;text-align:center;top:583.55px;color:#5e5e5e">413</div>
<svg class="a" style="left:703.6px;top:582.0px;" width="12" height="12" viewBox="0 0 12 12"><defs><linearGradient id="sg" x1="0" y1="0" x2="0" y2="1"><stop offset="0" stop-color="#4d9a16"/><stop offset="1" stop-color="#367b0a"/></linearGradient></defs><circle cx="6" cy="6" r="5.4" fill="url(#sg)"/><path d="M3.4 6.4 L5.3 8.1 L8.7 4.3" fill="none" stroke="#fff" stroke-width="1.55" stroke-linecap="round" stroke-linejoin="round"/></svg>
<div class="a" style="left:22.0px;top:598.5px;width:1152.0px;height:22.3px;background:#fff"></div>
<div class="a" style="left:47.0px;top:598.5px;width:1px;height:22.3px;background:#f1f1f1"></div>
<div class="a" style="left:679.2px;top:598.5px;width:1px;height:22.3px;background:#f1f1f1"></div>
<div class="a" style="left:737.5px;top:598.5px;width:1px;height:22.3px;background:#f1f1f1"></div>
<div class="a" style="left:852.9px;top:598.5px;width:1px;height:22.3px;background:#f1f1f1"></div>
<div class="a" style="left:968.7px;top:598.5px;width:1px;height:22.3px;background:#f1f1f1"></div>
<div class="a" style="left:1084.0px;top:598.5px;width:1px;height:22.3px;background:#f1f1f1"></div>
<div class="a" style="left:1142.4px;top:598.5px;width:1px;height:22.3px;background:#f1f1f1"></div>
<div class="a" style="left:22.0px;top:620.1999999999999px;width:1152.0px;height:1px;background:#f5f5f5"></div>
<div class="a" style="left:31.1px;top:605.6px;width:9.2px;height:9px;border:1px solid #bdbdbd;border-radius:2px;background:#fff"></div>
<div class="a" style="left:53.8px;top:605.71px;font-size:8.85px;color:#1a66a3">Botón - Imagen</div>
<div class="a" style="left:771.9px;top:604.0px;width:45.8px;height:11.6px;border:1px solid #d0d0d0;border-top-color:#bcbcbc;border-left-color:#c4c4c4;background:#fff"></div>
<div class="a" style="left:771.7px;width:45.8px;text-align:center;top:606.77px;font-size:7.0px;color:#b0b0b0;-webkit-text-stroke-width:0">2</div>
<div class="a" style="left:861.8px;width:100px;text-align:center;top:605.85px;color:#5e5e5e">editors-xtd</div>
<div class="a" style="left:977.2px;width:100px;text-align:center;top:605.85px;color:#5e5e5e">image</div>
<div class="a" style="left:1064.3px;width:100px;text-align:center;top:605.85px;color:#5e5e5e">Publico</div>
<div class="a" style="left:1109.6px;width:100px;text-align:center;top:605.85px;color:#5e5e5e">414</div>
<svg class="a" style="left:703.6px;top:604.3px;" width="12" height="12" viewBox="0 0 12 12"><defs><linearGradient id="sg" x1="0" y1="0" x2="0" y2="1"><stop offset="0" stop-color="#4d9a16"/><stop offset="1" stop-color="#367b0a"/></linearGradient></defs><circle cx="6" cy="6" r="5.4" fill="url(#sg)"/><path d="M3.4 6.4 L5.3 8.1 L8.7 4.3" fill="none" stroke="#fff" stroke-width="1.55" stroke-linecap="round" stroke-linejoin="round"/></svg>
<div class="a" style="left:0;top:611.3px;width:365.5px;height:10px;background:#f2f2f2;border-top:1px solid #cfcfcf;border-right:1px solid #cfcfcf;border-radius:0 4px 0 0"></div>
<div class="a" style="left:28px;top:613.9px;font-size:8px;color:#222">index.php?option=com_jsecure&amp;task=basic&amp;view=jsecure - Configuración básica</div>
<div class="a" style="left:198.3px;top:64.5px;width:113.5px;height:156px;background:#f2f2f2;border-right:1px solid #d9d9d9;border-bottom:1px solid #d9d9d9;box-shadow:1px 1px 1px rgba(0,0,0,.06)"></div>
<div class="a" style="left:198.3px;top:64.5px;width:15.4px;height:155.5px;background:#d6d6d6"></div>
<div class="a" style="left:218.4px;top:69.75px;color:#333">Banners</div>
<div class="a" style="left:305.3px;top:70.3px;width:0;height:0;border-top:3.3px solid transparent;border-bottom:3.3px solid transparent;border-left:4px solid #1f87c6"></div>
<div class="a" style="left:218.4px;top:87.05px;color:#333">Buscar</div>
<div class="a" style="left:218.4px;top:104.35px;color:#333">Búsqueda inteligente</div>
<div class="a" style="left:218.4px;top:121.65px;color:#333">Contactos</div>
<div class="a" style="left:305.3px;top:122.2px;width:0;height:0;border-top:3.3px solid transparent;border-bottom:3.3px solid transparent;border-left:4px solid #1f87c6"></div>
<div class="a" style="left:218.4px;top:138.95px;color:#333">Enlaces Web</div>
<div class="a" style="left:305.3px;top:139.5px;width:0;height:0;border-top:3.3px solid transparent;border-bottom:3.3px solid transparent;border-left:4px solid #1f87c6"></div>
<div class="a" style="left:199px;top:152.4px;width:111.8px;height:15.8px;background:#dae3ed;border:1.2px solid #5a8bb6;border-radius:1px"></div>
<div class="a" style="left:218.4px;top:156.25px;color:#333">jSecure Authentication</div>
<div class="a" style="left:218.4px;top:173.55px;color:#333">Mensajería</div>
<div class="a" style="left:305.3px;top:174.1px;width:0;height:0;border-top:3.3px solid transparent;border-bottom:3.3px solid transparent;border-left:4px solid #1f87c6"></div>
<div class="a" style="left:218.4px;top:190.85px;color:#333">Noticias externas</div>
<div class="a" style="left:305.3px;top:191.39999999999998px;width:0;height:0;border-top:3.3px solid transparent;border-bottom:3.3px solid transparent;border-left:4px solid #1f87c6"></div>
<div class="a" style="left:218.4px;top:208.15px;color:#333">Redireccionar</div>
<div class="a" style="left:312.4px;top:152.4px;width:119.2px;height:69.5px;background:#f2f2f2;border-right:1px solid #d9d9d9;border-bottom:1px solid #d9d9d9"></div>
<div class="a" style="left:312.4px;top:152.4px;width:14.6px;height:69px;background:#d6d6d6"></div>
<div class="a" style="left:331.9px;top:158.05px;color:#2a2a2a">Basic Configuration</div>
<svg class="a" style="left:314.5px;top:157.0px;" width="10" height="8" viewBox="0 0 10 8"><defs><linearGradient id="fg" x1="0" y1="0" x2="0" y2="1"><stop offset="0" stop-color="#54c0f4"/><stop offset="1" stop-color="#1b94dd"/></linearGradient></defs><rect x="0" y="0" width="9.6" height="2.2" fill="#e6e6e6"/><rect x="0.3" y="0.5" width="1" height="1.2" fill="#e44"/><rect x="1.5" y="0.5" width="1" height="1.2" fill="#ec3"/><rect x="2.7" y="0.5" width="1" height="1.2" fill="#5b5"/><rect x="0" y="1.9" width="9.6" height="5.5" rx=".6" fill="url(#fg)"/></svg>
<div class="a" style="left:331.9px;top:175.1px;color:#2a2a2a">Advanced Configuration</div>
<svg class="a" style="left:314.5px;top:174.05px;" width="10" height="8" viewBox="0 0 10 8"><defs><linearGradient id="fg" x1="0" y1="0" x2="0" y2="1"><stop offset="0" stop-color="#54c0f4"/><stop offset="1" stop-color="#1b94dd"/></linearGradient></defs><rect x="0" y="0" width="9.6" height="2.2" fill="#e6e6e6"/><rect x="0.3" y="0.5" width="1" height="1.2" fill="#e44"/><rect x="1.5" y="0.5" width="1" height="1.2" fill="#ec3"/><rect x="2.7" y="0.5" width="1" height="1.2" fill="#5b5"/><rect x="0" y="1.9" width="9.6" height="5.5" rx=".6" fill="url(#fg)"/></svg>
<div class="a" style="left:331.9px;top:192.15px;color:#2a2a2a">View Log</div>
<svg class="a" style="left:314.5px;top:191.1px;" width="10" height="8" viewBox="0 0 10 8"><defs><linearGradient id="fg" x1="0" y1="0" x2="0" y2="1"><stop offset="0" stop-color="#54c0f4"/><stop offset="1" stop-color="#1b94dd"/></linearGradient></defs><rect x="0" y="0" width="9.6" height="2.2" fill="#e6e6e6"/><rect x="0.3" y="0.5" width="1" height="1.2" fill="#e44"/><rect x="1.5" y="0.5" width="1" height="1.2" fill="#ec3"/><rect x="2.7" y="0.5" width="1" height="1.2" fill="#5b5"/><rect x="0" y="1.9" width="9.6" height="5.5" rx=".6" fill="url(#fg)"/></svg>
<div class="a" style="left:331.9px;top:209.2px;color:#2a2a2a">Help</div>
<svg class="a" style="left:314.5px;top:208.15px;" width="10" height="8" viewBox="0 0 10 8"><defs><linearGradient id="fg" x1="0" y1="0" x2="0" y2="1"><stop offset="0" stop-color="#54c0f4"/><stop offset="1" stop-color="#1b94dd"/></linearGradient></defs><rect x="0" y="0" width="9.6" height="2.2" fill="#e6e6e6"/><rect x="0.3" y="0.5" width="1" height="1.2" fill="#e44"/><rect x="1.5" y="0.5" width="1" height="1.2" fill="#ec3"/><rect x="2.7" y="0.5" width="1" height="1.2" fill="#5b5"/><rect x="0" y="1.9" width="9.6" height="5.5" rx=".6" fill="url(#fg)"/></svg>
<svg class="a" style="left:200.3px;top:68.5px;" width="13" height="13" viewBox="0 0 13 13"><path d="M1 3.5 L6 2.5 L7.5 6.5 L3 8 Z" fill="#22a6e6"/><path d="M5.5 3 Q8 0 12 0.8" fill="none" stroke="#3a7fd0" stroke-width=".8"/><path d="M3 8 L2.2 10.5" stroke="#aaa" stroke-width=".6"/><path d="M8 5 L8 11 L9.4 9.8 L10.6 12.4 L11.6 11.9 L10.4 9.4 L12.2 9.2 Z" fill="#222"/></svg>
<svg class="a" style="left:200.6px;top:86.6px;" width="12" height="12" viewBox="0 0 12 12"><defs><radialGradient id="sl" cx=".4" cy=".4"><stop offset="0" stop-color="#fff"/><stop offset=".7" stop-color="#d8f0fb"/><stop offset="1" stop-color="#9fc8dc"/></radialGradient></defs><path d="M7 7 L11 10.6" stroke="#9a9a9a" stroke-width="1.1" stroke-linecap="round"/><circle cx="4.8" cy="4.8" r="3" fill="url(#sl)" stroke="#bcd" stroke-width=".4"/></svg>
<svg class="a" style="left:200.6px;top:103.9px;" width="12" height="12" viewBox="0 0 12 12"><defs><radialGradient id="sl" cx=".4" cy=".4"><stop offset="0" stop-color="#fff"/><stop offset=".7" stop-color="#d8f0fb"/><stop offset="1" stop-color="#9fc8dc"/></radialGradient></defs><path d="M7 7 L11 10.6" stroke="#9a9a9a" stroke-width="1.1" stroke-linecap="round"/><circle cx="4.8" cy="4.8" r="3" fill="url(#sl)" stroke="#bcd" stroke-width=".4"/></svg>
<svg class="a" style="left:200.9px;top:119.2px;" width="11" height="12" viewBox="0 0 11 12"><rect x="0" y="0" width="9.6" height="11.7" fill="#1e7fd0"/><path d="M0 1.5 H1.2 M0 3.5 H1.2 M0 5.5 H1.2 M0 7.5 H1.2 M0 9.5 H1.2" stroke="#9fd" stroke-width=".3"/><rect x="9.5" y="1.4" width="1.2" height="3" fill="#f7d000"/><rect x="9.5" y="4.5" width="1.2" height="3" fill="#3fbf2a"/><rect x="9.5" y="7.6" width="1.2" height="3" fill="#e02a1a"/><circle cx="4.8" cy="4.4" r="1.5" fill="#fff"/><path d="M2.2 9 Q2.2 6.5 4.8 6.5 Q7.4 6.5 7.4 9 Z" fill="#fff"/></svg>
<svg class="a" style="left:200.7px;top:137.1px;" width="11" height="11" viewBox="0 0 11 11"><defs><linearGradient id="lk" x1="0" y1="0" x2="0" y2="1"><stop offset="0" stop-color="#2aa4e4"/><stop offset="1" stop-color="#0b6cab"/></linearGradient></defs><circle cx="5.3" cy="5.3" r="5.2" fill="url(#lk)"/><g transform="rotate(-45 5.3 5.3)" fill="none" stroke="#fff" stroke-width=".85"><rect x="1.4" y="4.1" width="4.4" height="2.4" rx="1.2"/><rect x="4.8" y="4.1" width="4.4" height="2.4" rx="1.2"/></g></svg>
<svg class="a" style="left:200.0px;top:153.8px;" width="12" height="12" viewBox="0 0 12 12"><defs><filter id="jsb" x="-20%" y="-20%" width="140%" height="140%"><feGaussianBlur stdDeviation=".55"/></filter></defs><rect x="0" y="0" width="12" height="12" fill="#fff"/><g filter="url(#jsb)"><path d="M0 0 H5 Q2 2 0 5 Z" fill="#f9c31c"/><path d="M12 0 H7 Q10 2 12 5 Z" fill="#f25a28"/><path d="M0 12 H5 Q2 10 0 7 Z" fill="#2f9ee8"/><path d="M12 12 H7 Q10 10 12 7 Z" fill="#3db24c"/><rect x="0" y="0" width="3.4" height="3.4" fill="#f9c31c"/><rect x="8.6" y="0" width="3.4" height="3.4" fill="#f25a28"/><rect x="0" y="8.6" width="3.4" height="3.4" fill="#2f9ee8"/><rect x="8.6" y="8.6" width="3.4" height="3.4" fill="#3db24c"/></g><path d="M4.9 5.9 V4.9 Q4.9 3.5 6 3.5 Q7.1 3.5 7.1 4.9 V5.9" fill="none" stroke="#8a8a8a" stroke-width=".7"/><rect x="4.1" y="5.7" width="3.8" height="3.3" rx=".5" fill="#3e4652"/></svg>
<svg class="a" style="left:200.0px;top:171.0px;" width="12" height="12" viewBox="0 0 12 12"><defs><linearGradient id="mtr" x1="0" y1="0" x2="0" y2="1"><stop offset="0" stop-color="#f2f2f2"/><stop offset="1" stop-color="#bdbdbd"/></linearGradient><linearGradient id="mbl" x1="0" y1="0" x2="0" y2="1"><stop offset="0" stop-color="#3cb0ea"/><stop offset="1" stop-color="#1a7cc4"/></linearGradient></defs><path d="M0.4 6.2 L1.6 5 H10 L11.3 6.2 V9.8 Q11.3 11.2 9.9 11.2 H1.8 Q0.4 11.2 0.4 9.8 Z" fill="url(#mtr)" stroke="#b0b0b0" stroke-width=".4"/><path d="M1.2 7.2 H3.8 L4.5 8.3 H7.2 L7.9 7.2 H10.6" fill="none" stroke="#fff" stroke-width=".6"/><path d="M0.6 6.4 Q0.8 1.2 6.2 1.1 L6.4 0.1 L11 3.2 L6.6 6.3 L6.4 5 Q2.6 5 0.6 6.4 Z" fill="url(#mbl)"/></svg>
<svg class="a" style="left:201.0px;top:189.0px;" width="11" height="11" viewBox="0 0 11 11"><circle cx="1.9" cy="8.6" r="1.5" fill="#1a7ec2"/><path d="M0.8 4.6 Q5 4.4 5.6 9.2" fill="none" stroke="#1a7ec2" stroke-width="1.5"/><path d="M0.8 1.2 Q8.6 1 9.2 9.2" fill="none" stroke="#1a7ec2" stroke-width="1.5"/></svg>
<svg class="a" style="left:200.5px;top:206.0px;" width="11" height="11" viewBox="0 0 11 11"><g transform=""><path d="M0.3 0.3 L4 1.1 L1.1 4 Z" fill="#1a7ec2"/><path d="M1.8 1.8 L3.8 3.8" stroke="#1a7ec2" stroke-width="1.4" stroke-linecap="round"/></g><g transform="rotate(90 5.5 5.5)"><path d="M0.3 0.3 L4 1.1 L1.1 4 Z" fill="#1a7ec2"/><path d="M1.8 1.8 L3.8 3.8" stroke="#1a7ec2" stroke-width="1.4" stroke-linecap="round"/></g><g transform="rotate(180 5.5 5.5)"><path d="M0.3 0.3 L4 1.1 L1.1 4 Z" fill="#1a7ec2"/><path d="M1.8 1.8 L3.8 3.8" stroke="#1a7ec2" stroke-width="1.4" stroke-linecap="round"/></g><g transform="rotate(270 5.5 5.5)"><path d="M0.3 0.3 L4 1.1 L1.1 4 Z" fill="#1a7ec2"/><path d="M1.8 1.8 L3.8 3.8" stroke="#1a7ec2" stroke-width="1.4" stroke-linecap="round"/></g></svg>
<svg class="a" style="left:223.6px;top:160.3px;" width="9" height="13.5" viewBox="0 0 9 13.5"><path d="M0.5 0.5 L0.5 11 L3 8.6 L4.8 12.6 L6.6 11.8 L4.8 8 L8.2 8 Z" fill="#fff" stroke="#000" stroke-width=".9" stroke-linejoin="round"/></svg>
<svg class="a" style="left:1011.2px;top:11.7px;" width="22" height="22" viewBox="0 0 22 22"><path d="M9.60 4.30 L4.00 4.20 L4.60 8.30 L9.60 13.80" fill="none" stroke="#262626" stroke-width="4.1" stroke-linecap="round" stroke-linejoin="round"/><path d="M9.60 4.30 L4.00 4.20 L4.60 8.30 L9.60 13.80" fill="none" stroke="#6cc04a" stroke-width="2.9" stroke-linecap="round" stroke-linejoin="round"/><circle cx="3.40" cy="3.30" r="3.1" fill="#6cc04a"/><circle cx="2.80" cy="2.10" r="1.2" fill="#fff" opacity=".35"/><path d="M17.10 9.60 L17.20 4.00 L13.10 4.60 L7.60 9.60" fill="none" stroke="#262626" stroke-width="4.1" stroke-linecap="round" stroke-linejoin="round"/><path d="M17.10 9.60 L17.20 4.00 L13.10 4.60 L7.60 9.60" fill="none" stroke="#f8a532" stroke-width="2.9" stroke-linecap="round" stroke-linejoin="round"/><circle cx="18.10" cy="3.40" r="3.1" fill="#f8a532"/><circle cx="17.50" cy="2.20" r="1.2" fill="#fff" opacity=".35"/><path d="M11.80 17.10 L17.40 17.20 L16.80 13.10 L11.80 7.60" fill="none" stroke="#262626" stroke-width="4.1" stroke-linecap="round" stroke-linejoin="round"/><path d="M11.80 17.10 L17.40 17.20 L16.80 13.10 L11.80 7.60" fill="none" stroke="#ef4d3c" stroke-width="2.9" stroke-linecap="round" stroke-linejoin="round"/><circle cx="18.00" cy="18.10" r="3.1" fill="#ef4d3c"/><circle cx="17.40" cy="16.90" r="1.2" fill="#fff" opacity=".35"/><path d="M4.30 11.80 L4.20 17.40 L8.30 16.80 L13.80 11.80" fill="none" stroke="#262626" stroke-width="4.1" stroke-linecap="round" stroke-linejoin="round"/><path d="M4.30 11.80 L4.20 17.40 L8.30 16.80 L13.80 11.80" fill="none" stroke="#3b9ee0" stroke-width="2.9" stroke-linecap="round" stroke-linejoin="round"/><circle cx="3.30" cy="18.00" r="3.1" fill="#3b9ee0"/><circle cx="2.70" cy="16.80" r="1.2" fill="#fff" opacity=".35"/></svg>
<svg class="a" style="left:1034.2px;top:15.8px;" width="80" height="15" viewBox="0 0 80 15"><path d="M8.4 0.6 V9.399999999999999 Q8.4 12.6 4.6 12.6 H0.9" fill="none" stroke="#ececec" stroke-width="1.45" stroke-linecap="round"/><ellipse cx="16.0" cy="8.1" rx="6.0" ry="4.5" fill="none" stroke="#ececec" stroke-width="1.45" stroke-linecap="round"/><ellipse cx="29.3" cy="8.1" rx="6.1" ry="4.5" fill="none" stroke="#ececec" stroke-width="1.45" stroke-linecap="round"/><path d="M37.6 12.6 V7.1 Q37.6 3.6 41.6 3.6 Q45.6 3.6 45.6 7.1 V12.6 M45.6 7.1 Q45.6 3.6 49.6 3.6 Q53.8 3.6 53.8 7.1 V12.6" fill="none" stroke="#ececec" stroke-width="1.45" stroke-linecap="round"/><path d="M56.7 0.6 V12.6" fill="none" stroke="#ececec" stroke-width="1.45" stroke-linecap="round"/><ellipse cx="64.0" cy="8.1" rx="5.6" ry="4.5" fill="none" stroke="#ececec" stroke-width="1.45" stroke-linecap="round"/><path d="M69.6 3.6 V12.6" fill="none" stroke="#ececec" stroke-width="1.45" stroke-linecap="round"/><path d="M73.6 0.6 V9.6" fill="none" stroke="#ececec" stroke-width="1.45" stroke-linecap="round" stroke-width="1.6"/><circle cx="73.6" cy="12.0" r="0.9" fill="#ececec"/><circle cx="77.4" cy="1.6" r="0.8" fill="#ddd"/></svg>
<div class="a" style="left:1117.4px;top:12.36px;font-size:20.6px;color:#1497d3;-webkit-text-stroke:0.8px #1497d3;transform:scaleX(0.912);transform-origin:0 0">spanish</div>
<svg class="a" style="left:815.5px;top:47.0px;" width="13" height="13" viewBox="0 0 13 13"><circle cx="5.1" cy="3.3" r="2.1" fill="#f7a11a"/><path d="M3.9 5.2 Q2 6.2 1.7 9.6 Q1.7 10.6 3 10.6 H7.3 Q8.6 10.6 8.6 9.6 Q8.3 6.2 6.3 5.2 Z" fill="#f7a11a"/><circle cx="8.1" cy="5.5" r="2.1" fill="#1a86c4"/><path d="M6.9 7.4 Q5 8.4 4.5 11.2 Q4.4 12.3 5.8 12.3 H10.4 Q11.8 12.3 11.7 11.2 Q11.2 8.4 9.3 7.4 Z" fill="#1a86c4"/></svg>
<svg class="a" style="left:915.8px;top:47.0px;" width="13" height="13" viewBox="0 0 13 13"><circle cx="5.1" cy="3.3" r="2.1" fill="#1a86c4"/><path d="M3.9 5.2 Q2 6.2 1.7 9.6 Q1.7 10.6 3 10.6 H7.3 Q8.6 10.6 8.6 9.6 Q8.3 6.2 6.3 5.2 Z" fill="#1a86c4"/><circle cx="8.1" cy="5.5" r="2.1" fill="#f7a11a"/><path d="M6.9 7.4 Q5 8.4 4.5 11.2 Q4.4 12.3 5.8 12.3 H10.4 Q11.8 12.3 11.7 11.2 Q11.2 8.4 9.3 7.4 Z" fill="#f7a11a"/></svg>
<svg class="a" style="left:994.5px;top:49.5px;" width="10" height="10" viewBox="0 0 10 10"><rect x="0.5" y="2.5" width="8.8" height="6.6" rx="1" fill="#f4f4f4" stroke="#bdbdbd" stroke-width=".6"/><path d="M2.5 5 L4.8 6.5 L7 5" fill="none" stroke="#6a8fb4" stroke-width=".8"/><circle cx="8.6" cy="1.6" r="1" fill="none" stroke="#8aa" stroke-width=".5"/></svg>
<svg class="a" style="left:1079.0px;top:51.5px;" width="10.2" height="7" viewBox="0 0 10.2 7"><rect x="0.3" y="0.3" width="9.6" height="6.4" fill="#6aa7ee" stroke="#8e9fb3" stroke-width=".6"/><rect x="1" y="1" width="8.2" height="2" fill="#9cc7f6"/></svg>
<svg class="a" style="left:1128.7px;top:48.5px;" width="11" height="11" viewBox="0 0 11 11"><defs><linearGradient id="rex" x1="0" y1="0" x2="0" y2="1"><stop offset="0" stop-color="#f25a2a"/><stop offset="1" stop-color="#b42a0c"/></linearGradient></defs><circle cx="5.5" cy="5.5" r="5.2" fill="url(#rex)"/><rect x="4.7" y="2.2" width="1.6" height="6.6" fill="#fff"/></svg>
<svg class="a" style="left:19.5px;top:74.8px;" width="36" height="36" viewBox="0 0 36 36"><defs>
<linearGradient id="pg" x1="0" y1="0" x2="0" y2="1"><stop offset="0" stop-color="#ffd24a"/><stop offset=".5" stop-color="#fbb416"/><stop offset="1" stop-color="#ee8c07"/></linearGradient>
<linearGradient id="pr" x1="0" y1="0" x2="0" y2="1"><stop offset="0" stop-color="#9a9a9a"/><stop offset=".45" stop-color="#f4f4f4"/><stop offset="1" stop-color="#7b7b7b"/></linearGradient>
</defs>
<g transform="translate(18.6 18.0) rotate(-45) scale(1.08)">
<rect x="5" y="-6.6" width="10" height="3" rx="1.2" fill="url(#pr)"/>
<rect x="5" y="3.6" width="10" height="3" rx="1.2" fill="url(#pr)"/>
<rect x="-20.6" y="-2.3" width="8" height="4.6" rx="1.6" fill="url(#pg)"/>
<rect x="-13.6" y="-8.4" width="3.6" height="16.8" rx="1.6" fill="url(#pg)"/>
<path d="M-11 -5 L-6 -8.5 L-6 8.5 L-11 5 Z" fill="#f0980a"/>
<rect x="-6.6" y="-10.8" width="12.6" height="21.6" rx="2.2" fill="url(#pg)"/>
<path d="M-3.5 -5 V5 M-1.3 -5 V5 M0.9 -5 V5" stroke="#e89b08" stroke-width=".7" opacity=".8"/>
</g></svg>
<svg class="a" style="left:9.899999999999999px;top:130.3px;" width="18" height="18" viewBox="0 0 18 18"><defs><linearGradient id="ig" x1="0" y1="0" x2="0" y2="1"><stop offset="0" stop-color="#22ade4"/><stop offset="1" stop-color="#0a6fa8"/></linearGradient></defs>
<circle cx="9" cy="9" r="8.9" fill="url(#ig)"/>
<circle cx="9.6" cy="3.7" r="1.55" fill="#fff"/>
<path d="M8.3 6.6 L10.9 6.6 L9.3 13.4 Q9.2 14.2 10.3 14 L10.1 15 L6.6 15 L8.6 7.6 L7.7 7.6 Z" fill="#fff"/></svg>
<svg class="a" style="left:905.6px;top:77.5px;" width="26" height="27" viewBox="0 0 26 27"><defs><linearGradient id="g25b0e8" x1="0" y1="0" x2="0" y2="1"><stop offset="0" stop-color="#25b0e8"/><stop offset="1" stop-color="#0a6aa8"/></linearGradient><radialGradient id="sh25b0e8"><stop offset="0" stop-color="#000" stop-opacity=".22"/><stop offset="1" stop-color="#000" stop-opacity="0"/></radialGradient></defs><ellipse cx="13" cy="23.2" rx="9" ry="2.2" fill="url(#sh25b0e8)"/><circle cx="13" cy="12" r="10.2" fill="url(#g25b0e8)"/><g transform="translate(13 12) rotate(-45)"><rect x="-5.5" y="-1.5" width="10" height="3" fill="#f7b21c"/><rect x="-5.5" y="-1.5" width="10" height="1" fill="#ffd35c"/><rect x="4.5" y="-1.5" width="2.2" height="3" rx=".6" fill="#f39aa0"/><path d="M-5.5 -1.5 L-8.2 0 L-5.5 1.5 Z" fill="#f3d9a8"/><path d="M-7.2 -0.6 L-8.2 0 L-7.2 0.6 Z" fill="#333"/></g></svg>
<svg class="a" style="left:948.7px;top:77.5px;" width="26" height="27" viewBox="0 0 26 27"><defs><linearGradient id="g5fb012" x1="0" y1="0" x2="0" y2="1"><stop offset="0" stop-color="#5fb012"/><stop offset="1" stop-color="#3a7a09"/></linearGradient><radialGradient id="sh5fb012"><stop offset="0" stop-color="#000" stop-opacity=".22"/><stop offset="1" stop-color="#000" stop-opacity="0"/></radialGradient></defs><ellipse cx="13" cy="23.2" rx="9" ry="2.2" fill="url(#sh5fb012)"/><circle cx="13" cy="12" r="10.2" fill="url(#g5fb012)"/><path d="M8.2 12.3 L11.6 15.6 L18 8.8" fill="none" stroke="#fff" stroke-width="2.9" stroke-linecap="round" stroke-linejoin="round"/></svg>
<svg class="a" style="left:994.1px;top:77.5px;" width="26" height="27" viewBox="0 0 26 27"><defs><linearGradient id="gf4562a" x1="0" y1="0" x2="0" y2="1"><stop offset="0" stop-color="#f4562a"/><stop offset="1" stop-color="#c23616"/></linearGradient><radialGradient id="shf4562a"><stop offset="0" stop-color="#000" stop-opacity=".22"/><stop offset="1" stop-color="#000" stop-opacity="0"/></radialGradient></defs><ellipse cx="13" cy="23.2" rx="9" ry="2.2" fill="url(#shf4562a)"/><circle cx="13" cy="12" r="10.2" fill="url(#gf4562a)"/><circle cx="13" cy="12" r="4.6" fill="#fff"/></svg>
<svg class="a" style="left:1054.2px;top:81.8px;" width="22" height="19" viewBox="0 0 22 19"><defs><linearGradient id="oc" x1="0" y1="0" x2="0" y2="1"><stop offset="0" stop-color="#fbb53a"/><stop offset="1" stop-color="#e98509"/></linearGradient>
<radialGradient id="ocs"><stop offset="0" stop-color="#000" stop-opacity=".25"/><stop offset="1" stop-color="#000" stop-opacity="0"/></radialGradient></defs>
<ellipse cx="9" cy="17" rx="6.5" ry="1.2" fill="url(#ocs)"/>
<path d="M2.5 8.1 L8.4 13.6 L19.3 2.7" fill="none" stroke="url(#oc)" stroke-width="3.6" stroke-linecap="round" stroke-linejoin="round"/></svg>
<svg class="a" style="left:1108.3px;top:80.0px;" width="20" height="20" viewBox="0 0 20 20"><defs><linearGradient id="og" x1="0" y1="0" x2="0" y2="1"><stop offset="0" stop-color="#fafafa"/><stop offset=".55" stop-color="#dedede"/><stop offset="1" stop-color="#b4b4b4"/></linearGradient>
<linearGradient id="od" x1="0" y1="0" x2="0" y2="1"><stop offset="0" stop-color="#b8b8b8"/><stop offset=".5" stop-color="#e6e6e6"/><stop offset="1" stop-color="#ffffff"/></linearGradient></defs>
<rect x="0.4" y="0.1" width="19" height="18.9" rx="1.8" fill="url(#og)" stroke="#cfcfcf" stroke-width=".5"/>
<rect x="3.8" y="3.6" width="5" height="9.8" rx="1.6" fill="url(#od)" stroke="#4a4a4a" stroke-width=".75"/>
<path d="M4.4 8.2 H8.2" stroke="#777" stroke-width=".8"/>
<rect x="11" y="3.7" width="5" height="10.3" rx="1.6" fill="#f4f4f4" stroke="#4a4a4a" stroke-width=".8"/>
<path d="M11.4 10.6 H15.6" stroke="#555" stroke-width=".8"/>
<circle cx="2.2" cy="2.3" r=".6" fill="#777"/><circle cx="17.6" cy="2.3" r=".6" fill="#777"/></svg>
<svg class="a" style="left:1154.4px;top:79.4px;" width="22" height="23" viewBox="0 0 22 23"><defs><radialGradient id="lbs"><stop offset="0" stop-color="#000" stop-opacity=".2"/><stop offset="1" stop-color="#000" stop-opacity="0"/></radialGradient></defs><ellipse cx="11" cy="21.2" rx="8" ry="1.6" fill="url(#lbs)"/><circle cx="11" cy="10.5" r="7.0" fill="none" stroke="#f1f1f1" stroke-width="5.3999999999999995"/><circle cx="11" cy="10.5" r="7.0" fill="none" stroke="#e4581c" stroke-width="5.3999999999999995" stroke-dasharray="8.137 2.859" stroke-dashoffset="-1.429"/><circle cx="11" cy="10.5" r="9.7" fill="none" stroke="#d9d9d9" stroke-width=".4"/></svg>
<svg class="a" style="left:916.0px;top:227.3px;" width="9" height="8.5" viewBox="0 0 9 8.5"><path d="M0.5 1 H1.8 M0.5 3.3 H4.2 M0.5 5.4 H6.4 M0.5 7.4 H8.6" stroke="#444" stroke-width="1"/><path d="M1.5 0.4 L8.6 7" stroke="#888" stroke-width=".4"/></svg>
</body></html>
